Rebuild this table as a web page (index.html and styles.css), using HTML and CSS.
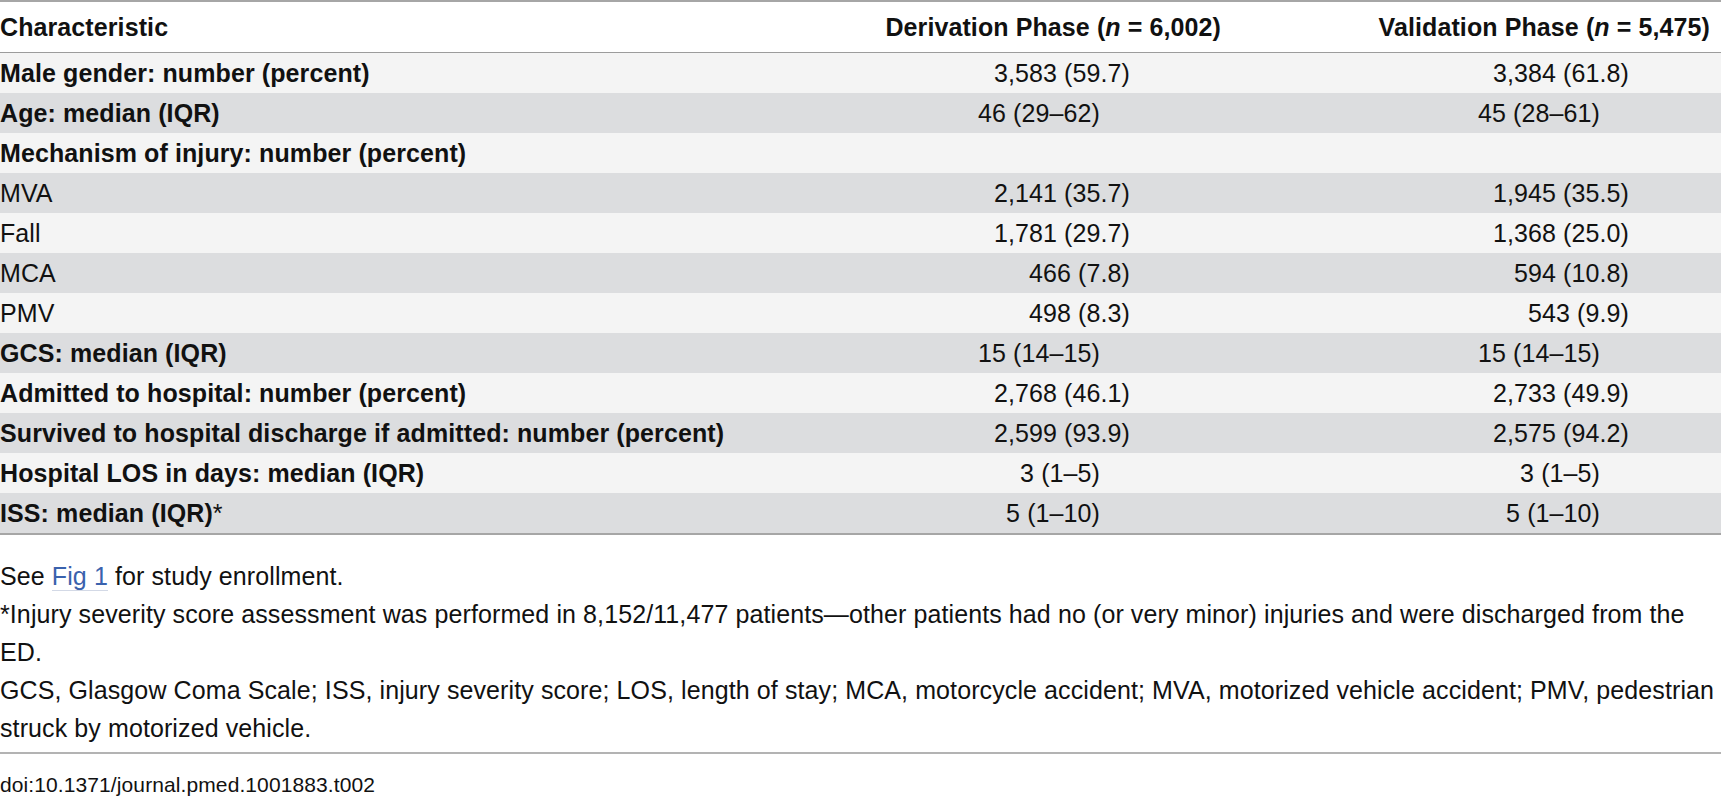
FILE: index.html
```html
<!DOCTYPE html>
<html lang="en">
<head>
    <meta charset="UTF-8">
    <title>Table 2. Patient characteristics</title>
    <link rel="stylesheet" href="styles.css">
</head>
<body>
    <table class="data-table">
        <colgroup>
            <col class="col-label">
            <col class="col-deriv">
            <col class="col-valid">
        </colgroup>
        <thead>
            <tr>
                <th class="label">Characteristic</th>
                <th class="deriv">Derivation Phase (<i>n</i> = 6,002)</th>
                <th class="valid">Validation Phase (<i>n</i> = 5,475)</th>
            </tr>
        </thead>
        <tbody>
            <tr>
                <td class="label strong">Male gender: number (percent)</td>
                <td class="deriv num">3,583 (59.7)</td>
                <td class="valid num">3,384 (61.8)</td>
            </tr>
            <tr>
                <td class="label strong">Age: median (IQR)</td>
                <td class="deriv med">46 (29–62)</td>
                <td class="valid med">45 (28–61)</td>
            </tr>
            <tr>
                <td class="label strong">Mechanism of injury: number (percent)</td>
                <td class="deriv num"></td>
                <td class="valid num"></td>
            </tr>
            <tr>
                <td class="label">MVA</td>
                <td class="deriv num">2,141 (35.7)</td>
                <td class="valid num">1,945 (35.5)</td>
            </tr>
            <tr>
                <td class="label">Fall</td>
                <td class="deriv num">1,781 (29.7)</td>
                <td class="valid num">1,368 (25.0)</td>
            </tr>
            <tr>
                <td class="label">MCA</td>
                <td class="deriv num">466 (7.8)</td>
                <td class="valid num">594 (10.8)</td>
            </tr>
            <tr>
                <td class="label">PMV</td>
                <td class="deriv num">498 (8.3)</td>
                <td class="valid num">543 (9.9)</td>
            </tr>
            <tr>
                <td class="label strong">GCS: median (IQR)</td>
                <td class="deriv med">15 (14–15)</td>
                <td class="valid med">15 (14–15)</td>
            </tr>
            <tr>
                <td class="label strong">Admitted to hospital: number (percent)</td>
                <td class="deriv num">2,768 (46.1)</td>
                <td class="valid num">2,733 (49.9)</td>
            </tr>
            <tr>
                <td class="label strong">Survived to hospital discharge if admitted: number (percent)</td>
                <td class="deriv num">2,599 (93.9)</td>
                <td class="valid num">2,575 (94.2)</td>
            </tr>
            <tr>
                <td class="label strong">Hospital LOS in days: median (IQR)</td>
                <td class="deriv med">3 (1–5)</td>
                <td class="valid med">3 (1–5)</td>
            </tr>
            <tr>
                <td class="label strong">ISS: median (IQR)<span class="reg">*</span></td>
                <td class="deriv med">5 (1–10)</td>
                <td class="valid med">5 (1–10)</td>
            </tr>
        </tbody>
    </table>

    <div class="notes">
        <p>See <a href="#" class="ref">Fig 1</a> for study enrollment.</p>
        <p>*Injury severity score assessment was performed in 8,152/11,477 patients—other patients had no (or very minor) injuries and were discharged from the ED.</p>
        <p>GCS, Glasgow Coma Scale; ISS, injury severity score; LOS, length of stay; MCA, motorcycle accident; MVA, motorized vehicle accident; PMV, pedestrian struck by motorized vehicle.</p>
    </div>

    <div class="doi">doi:10.1371/journal.pmed.1001883.t002</div>
</body>
</html>
```

FILE: styles.css
```css
/* Page */
body {
    margin: 0;
    background: #fff;
    color: #111;
    font-family: "Liberation Sans", Arial, Helvetica, sans-serif;
    font-size: 25px;
    letter-spacing: 0.1px;
    overflow: hidden;
}

/* Table */
.data-table {
    width: 1721px;
    table-layout: fixed;
    border-collapse: separate;
    border-spacing: 0;
    border-top: 2px solid #a6a6a6;
    border-bottom: 2px solid #a6a6a6;
}

.col-label { width: 820px; }
.col-deriv { width: 411px; }
.col-valid { width: 490px; }

.data-table th,
.data-table td {
    padding: 0;
    white-space: nowrap;
}

.data-table th {
    line-height: 50px;
    font-weight: bold;
    background: #fff;
    border-bottom: 1px solid #9c9c9c;
}

.data-table td {
    line-height: 40px;
    height: 40px;
}

.data-table tbody tr:nth-child(odd) td { background: #f4f4f4; }
.data-table tbody tr:nth-child(even) td { background: #dcdddf; }

.label { text-align: left; }
.strong { font-weight: bold; }
.reg { font-weight: normal; }

/* Column alignment */
th.deriv { text-align: right; padding-right: 10px; }
th.valid { text-align: right; padding-right: 11px; }

td.deriv.num { text-align: right; padding-right: 101px; }
td.deriv.med { text-align: right; padding-right: 131px; }
td.valid.num { text-align: right; padding-right: 92px; }
td.valid.med { text-align: right; padding-right: 121px; }

/* Footnotes */
.notes {
    margin-top: 22px;
    padding-bottom: 5px;
    border-bottom: 2px solid #b3b3b3;
}

.notes p {
    margin: 0;
    line-height: 38px;
}

.ref {
    color: #3a62ad;
    text-decoration: none;
    border-bottom: 1px solid #d3d9e6;
}

.doi {
    margin-top: 12px;
    font-size: 21px;
    line-height: 38px;
}
```
